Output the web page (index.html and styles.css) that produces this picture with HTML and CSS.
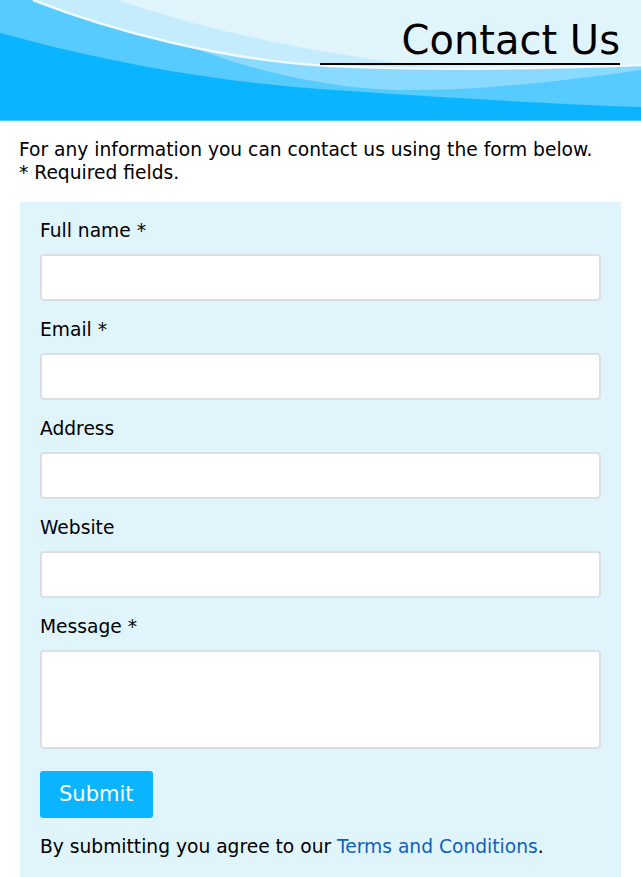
FILE: index.html
```html
<!DOCTYPE html>
<html lang="en">
<head>
<meta charset="utf-8">
<title>Contact Us</title>
<link rel="stylesheet" href="styles.css">
</head>
<body>
<header class="hero">
  <svg class="hero-waves" viewBox="0 0 641 120" preserveAspectRatio="none" aria-hidden="true">
    <rect x="0" y="0" width="641" height="120" fill="#e0f4fc"/>
    <path d="M118,0 C170,18 260,45 420,66 L641,75 L641,120 L0,120 L0,0 Z" fill="#c4ecfd"/>
    <path d="M33,0 C110,30 220,60 330,66 C450,71 550,68 641,65 V120 H0 V0 Z" fill="#57cbfe"/>
    <path d="M197,49 C250,58 290,63 330,66 C450,71 550,68 641,65 L641,70 C560,82 470,91 400,90 C330,89 250,70 197,49 Z" fill="#8ad9fe"/>
    <path d="M33,0 C110,30 220,60 330,66 C450,71 550,68 641,65" fill="none" stroke="#eefaff" stroke-width="2.5"/>
    <path d="M0,33 C100,60 200,80 320,89 C450,98 550,104 641,107 V120 H0 Z" fill="#0ab4fe"/>
  </svg>
  <h1 class="hero-title">Contact Us</h1>
</header>
<main class="content">
  <p class="intro">For any information you can contact us using the form below.<br>* Required fields.</p>
  <form class="contact-form">
    <label class="field-label" for="name">Full name *</label>
    <input class="field-input" id="name" type="text">
    <label class="field-label" for="email">Email *</label>
    <input class="field-input" id="email" type="email">
    <label class="field-label" for="address">Address</label>
    <input class="field-input" id="address" type="text">
    <label class="field-label" for="website">Website</label>
    <input class="field-input" id="website" type="text">
    <label class="field-label" for="message">Message *</label>
    <textarea class="field-input field-textarea" id="message"></textarea>
    <button class="submit-btn" type="button">Submit</button>
    <p class="terms">By submitting you agree to our <a class="terms-link" href="#">Terms and Conditions</a>.</p>
  </form>
</main>
</body>
</html>
```
FILE: styles.css
```css
html, body {
  margin: 0;
  padding: 0;
  background: #ffffff;
}
body {
  font-family: "DejaVu Sans", Verdana, sans-serif;
  font-size: 18.667px;
  line-height: 23px;
  color: #000;
}
.hero {
  position: relative;
  height: 120px;
  border-bottom: 1px solid #4cc9fe;
  overflow: hidden;
}
.hero-waves {
  position: absolute;
  left: 0;
  top: 0;
  width: 100%;
  height: 120px;
  display: block;
}
.hero-title {
  position: relative;
  width: 300px;
  margin: 0 21px 0 auto;
  padding-top: 17px;
  font-size: 40px;
  line-height: 46px;
  font-weight: normal;
  text-align: right;
  border-bottom: 2px solid #000;
}
.content {
  padding: 0 20px;
}
.intro {
  margin: 17px 0 18px -1px;
}
.contact-form {
  display: flex;
  flex-direction: column;
  align-items: flex-start;
  background: #e0f4fc;
  padding: 17px 20px 20px;
}
.field-label {
  display: block;
  margin-bottom: 12px;
}
.field-input {
  box-sizing: border-box;
  width: 100%;
  height: 47px;
  margin: 0 0 17px;
  border: 2px solid #dcdfe2;
  border-radius: 4px;
  background: #fff;
  font: inherit;
  padding: 6px 10px;
}
.field-textarea {
  height: 99px;
  resize: none;
  margin-bottom: 22px;
}
.submit-btn {
  font-family: inherit;
  font-size: 21px;
  line-height: 25px;
  color: #fff;
  background: #0ab4fe;
  border: none;
  border-radius: 3px;
  padding: 11px 19px;
  cursor: pointer;
}
.terms {
  margin: 17px 0 0;
}
.terms-link {
  color: #0d62c1;
  text-decoration: none;
}
```
